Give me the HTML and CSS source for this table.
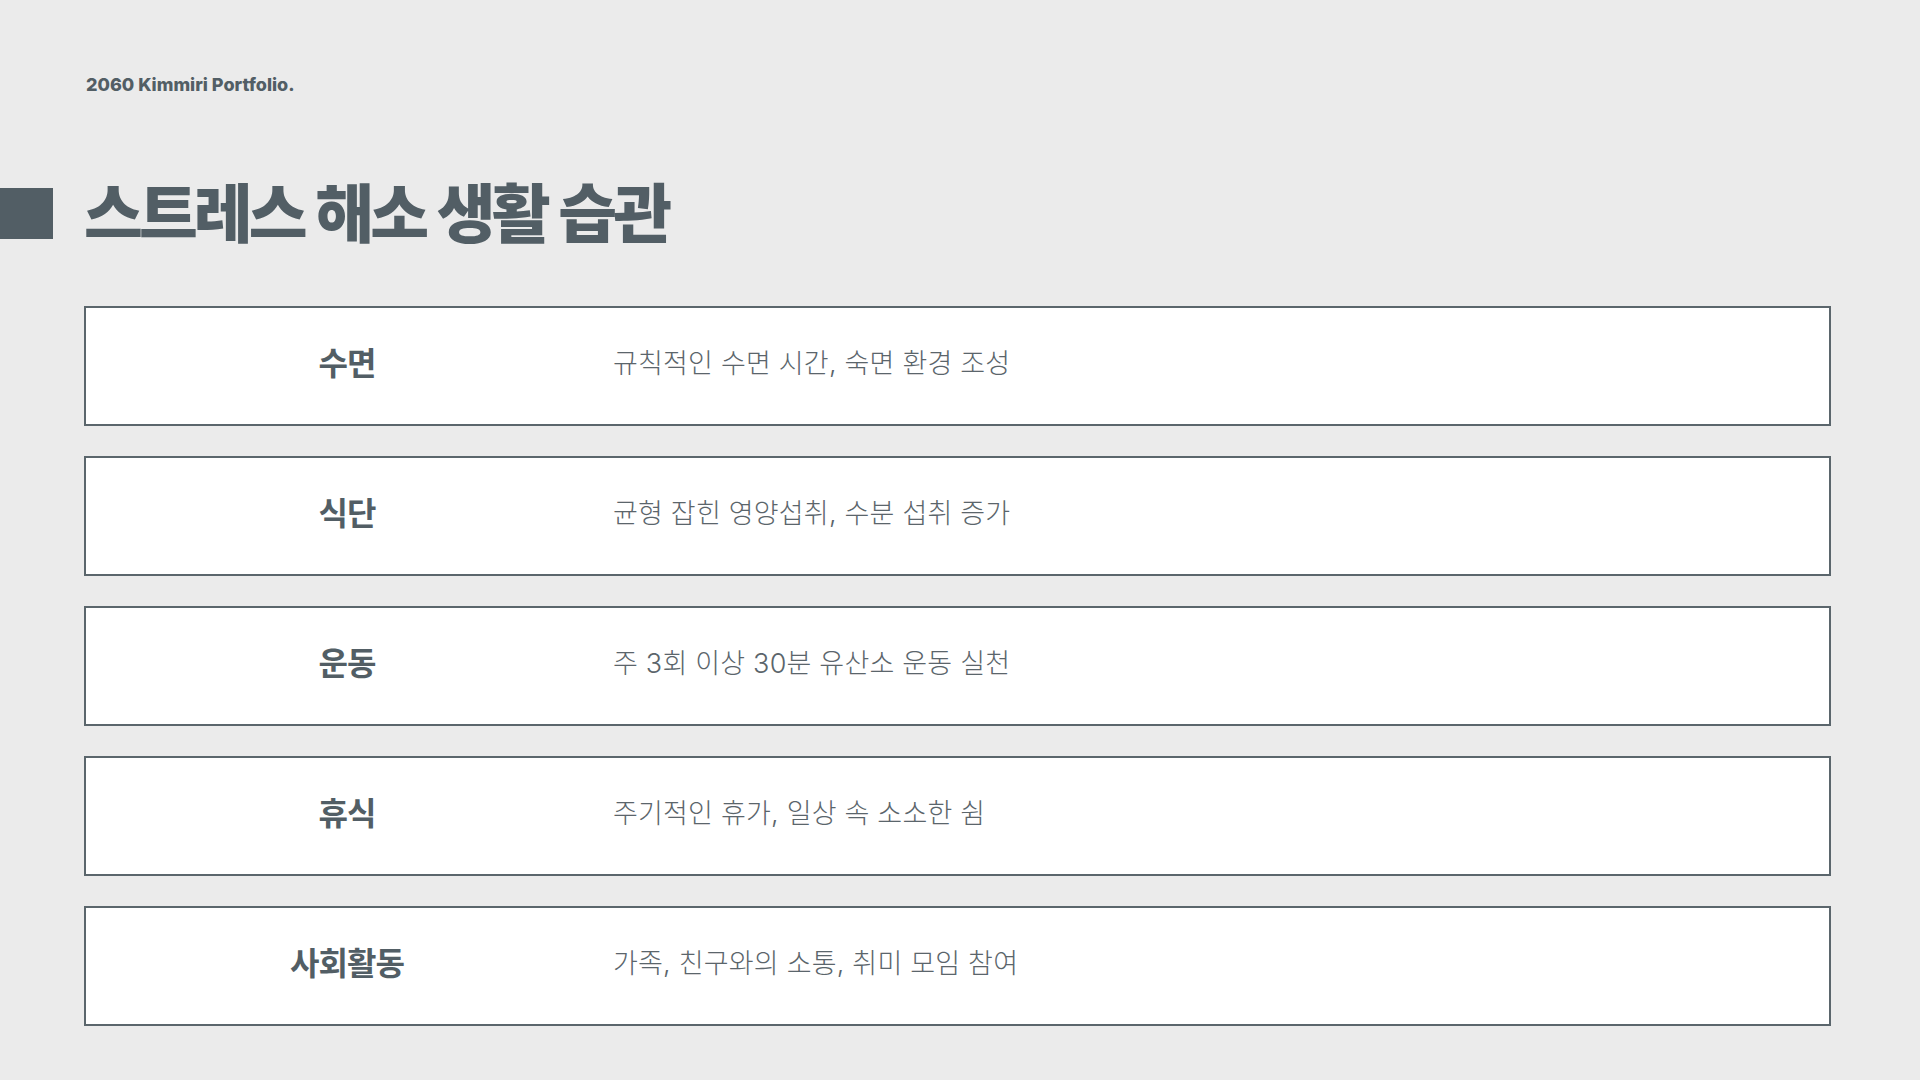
FILE: index.html
```html
<!DOCTYPE html>
<html lang="ko">
<head>
<meta charset="utf-8">
<title>스트레스 해소 생활 습관</title>
<link rel="stylesheet" href="styles.css">
</head>
<body>
<div class="page">
  <header class="brand">2060 Kimmiri Portfolio.</header>
  <h1 class="title"><span class="title-mark"></span><span class="title-text">스트레스 해소 생활 습관</span></h1>
  <ul class="list">
    <li class="row"><span class="label">수면</span><span class="desc">규칙적인 수면 시간, 숙면 환경 조성</span></li>
    <li class="row"><span class="label">식단</span><span class="desc">균형 잡힌 영양섭취, 수분 섭취 증가</span></li>
    <li class="row"><span class="label">운동</span><span class="desc">주 3회 이상 30분 유산소 운동 실천</span></li>
    <li class="row"><span class="label">휴식</span><span class="desc">주기적인 휴가, 일상 속 소소한 쉼</span></li>
    <li class="row"><span class="label">사회활동</span><span class="desc">가족, 친구와의 소통, 취미 모임 참여</span></li>
  </ul>
</div>
</body>
</html>
```

FILE: styles.css
```css
* { box-sizing: border-box; }
html, body { margin: 0; padding: 0; }
body {
  background: #ebebeb;
  color: #525e65;
  font-family: Inter, "Noto Sans CJK KR", "Noto Sans", sans-serif;
  width: 1920px;
  height: 1080px;
  overflow: hidden;
}
.page {
  padding: 75px 89px 0 84px;
  display: flex;
  flex-direction: column;
}
.brand {
  font-size: 18px;
  font-weight: 800;
  letter-spacing: 0;
  line-height: 20px;
  padding-left: 2px;
}
.title {
  margin: 82px 0 0 -84px;
  display: flex;
  align-items: center;
  gap: 31px;
  font-size: 64px;
  font-weight: 900;
  letter-spacing: -4px;
  line-height: 72px;
}
.title-mark {
  width: 53px;
  height: 51px;
  background: #525e65;
  flex: none;
}
.title-text { position: relative; top: 1px; word-spacing: 3px; }
.list {
  list-style: none;
  margin: 57px 0 0;
  padding: 0;
  display: flex;
  flex-direction: column;
  gap: 30px;
}
.row {
  height: 120px;
  background: #fff;
  border: 2px solid #5b666c;
  display: grid;
  grid-template-columns: 522px 1fr;
  align-items: center;
  padding-bottom: 10px;
}
.label {
  text-align: center;
  font-size: 32px;
  font-weight: 700;
  letter-spacing: -1px;
}
.desc {
  padding-left: 5px;
  font-size: 27px;
  font-weight: 300;
  letter-spacing: 0.2px;
  color: #5b656b;
}
```
